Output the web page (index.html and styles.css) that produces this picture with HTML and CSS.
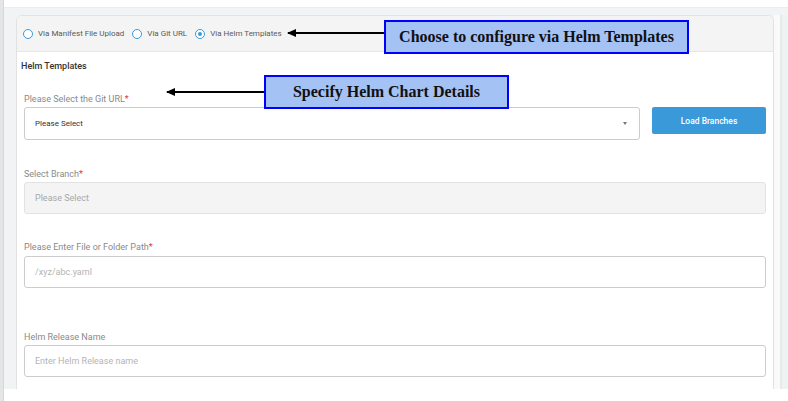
FILE: index.html
```html
<!DOCTYPE html>
<html lang="en">
<head>
    <meta charset="UTF-8">
    <meta name="viewport" content="width=device-width, initial-scale=1.0">
    <title>Helm Templates</title>
    <link rel="stylesheet" href="styles.css">
</head>
<body>
    <div class="page">
        <div class="rail"></div>
        <div class="main">
            <div class="topbar"></div>
            <div class="stage">
                <div class="card">
                    <div class="card-head">
                        <label class="radio"><span class="dot"></span>Via Manifest File Upload</label>
                        <label class="radio"><span class="dot"></span>Via Git URL</label>
                        <label class="radio"><span class="dot checked"></span>Via Helm Templates</label>
                    </div>
                    <div class="card-body">
                        <div class="section-title">Helm Templates</div>

                        <div class="group g-url">
                            <div class="label">Please Select the Git URL<span class="req">*</span></div>
                            <div class="row">
                                <div class="select">
                                    <span>Please Select</span>
                                    <span class="caret"></span>
                                </div>
                                <button class="btn">Load Branches</button>
                            </div>
                        </div>

                        <div class="group g-branch">
                            <div class="label">Select Branch<span class="req">*</span></div>
                            <div class="field disabled">Please Select</div>
                        </div>

                        <div class="group g-path">
                            <div class="label lb3">Please Enter File or Folder Path<span class="req">*</span></div>
                            <div class="field">/xyz/abc.yaml</div>
                        </div>

                        <div class="group g-release">
                            <div class="label">Helm Release Name</div>
                            <div class="field">Enter Helm Release name</div>
                        </div>
                    </div>
                </div>
                <div class="side"></div>
            </div>
        </div>
    </div>

    <!-- annotations -->
    <div class="arrow a1"></div>
    <div class="note n1">Choose to configure via Helm Templates</div>
    <div class="arrow a2"></div>
    <div class="note n2">Specify Helm Chart Details</div>
</body>
</html>
```

FILE: styles.css
```css
body {
    margin: 0;
    background: #ffffff;
    font-family: Roboto, "Liberation Sans", Arial, sans-serif;
    color: #333;
}

.page {
    display: flex;
    height: 401px;
}

.rail {
    width: 3px;
    background: #e4e6e6;
    border-right: 1px solid #d6d9d9;
}

.main {
    flex: 1;
    display: flex;
    flex-direction: column;
}

.topbar {
    height: 7px;
    background: #ffffff;
    border-bottom: 1px solid #ececec;
}

.stage {
    height: 381px;
    overflow: hidden;
    display: flex;
    background: #f1f4f4;
    padding: 7px 0 0 12px;
    box-sizing: border-box;
}

.card {
    width: 758px;
    height: 420px;
    background: #fff;
    border: 1px solid #e2e2e2;
    border-radius: 6px;
    box-sizing: border-box;
    flex-shrink: 0;
}

.side {
    flex: 1;
    background: linear-gradient(to right, #fafafa 0 6px, #e8eaea 6px 8px, #ecf3f3 8px);
}

.card-head {
    height: 35px;
    background: #f4f4f4;
    border-bottom: 1px solid #e6e6e6;
    border-radius: 6px 6px 0 0;
    display: flex;
    align-items: center;
    gap: 8px;
    padding-left: 6px;
}

.radio {
    display: flex;
    align-items: center;
    font-size: 8px;
    color: #5a5a5a;
}

.dot {
    width: 8px;
    height: 8px;
    border: 1.5px solid #3a9ad9;
    border-radius: 50%;
    margin-right: 5px;
    background: #fff;
    position: relative;
}

.dot.checked::after {
    content: '';
    position: absolute;
    left: 2px;
    top: 2px;
    width: 4px;
    height: 4px;
    border-radius: 50%;
    background: #3a9ad9;
}

.card-body {
    padding: 7px 7px 0 7px;
}

.section-title {
    font-size: 9px;
    font-weight: 500;
    color: #333;
    line-height: 14px;
    margin-left: -3px;
}

.label {
    font-size: 9px;
    color: #8a8a8a;
    line-height: 12px;
    margin-bottom: 2px;
}

.label.lb3 {
    margin-bottom: 3px;
}

.req {
    color: #e0333f;
}

.g-url { margin-top: 20px; }
.g-branch { margin-top: 28px; }
.g-path { margin-top: 27px; }
.g-release { margin-top: 43px; }

.row {
    display: flex;
    align-items: flex-start;
    gap: 12px;
}

.select {
    flex: 1;
    height: 33px;
    border: 1px solid #cccccc;
    border-radius: 3px;
    box-sizing: border-box;
    display: flex;
    align-items: center;
    justify-content: space-between;
    padding: 0 12px 0 10px;
    font-size: 8px;
    color: #333;
}

.caret {
    width: 0;
    height: 0;
    border-left: 2.5px solid transparent;
    border-right: 2.5px solid transparent;
    border-top: 3px solid #777;
}

.btn {
    width: 114px;
    height: 27px;
    background: #3a9ad9;
    border: none;
    border-radius: 2px;
    color: #fff;
    font-family: Roboto, sans-serif;
    font-size: 8.5px;
    font-weight: 500;
    padding: 0;
}

.field {
    height: 32px;
    border: 1px solid #cccccc;
    border-radius: 3px;
    box-sizing: border-box;
    display: flex;
    align-items: center;
    padding-left: 10px;
    font-size: 9px;
    color: #b4b4b4;
}

.field.disabled {
    background: #f4f4f4;
    border-color: #e2e2e2;
    color: #a8a8a8;
}

/* annotation callouts */
.note {
    position: absolute;
    box-sizing: border-box;
    background: #a4c2f4;
    border: 2px solid #0000ff;
    font-family: "Liberation Serif", "Times New Roman", serif;
    font-weight: bold;
    font-size: 16px;
    color: #111;
    display: flex;
    align-items: center;
    justify-content: center;
}

.n1 {
    left: 384px;
    top: 20px;
    width: 305px;
    height: 34px;
}

.n2 {
    left: 264px;
    top: 75px;
    width: 245px;
    height: 34px;
}

.arrow {
    position: absolute;
    height: 2px;
    background: #000;
}

.arrow::before {
    content: '';
    position: absolute;
    left: -1px;
    top: -3px;
    border-right: 9px solid #000;
    border-top: 4px solid transparent;
    border-bottom: 4px solid transparent;
}

.a1 {
    left: 288px;
    top: 32px;
    width: 96px;
}

.a2 {
    left: 167px;
    top: 91px;
    width: 97px;
}
```
